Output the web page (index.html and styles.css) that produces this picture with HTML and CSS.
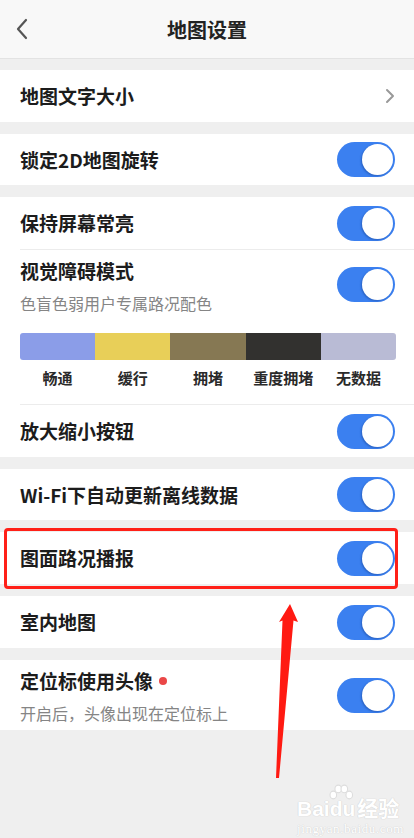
FILE: index.html
```html
<!DOCTYPE html>
<html lang="zh-CN">
<head>
  <meta charset="UTF-8" />
  <meta name="viewport" content="width=device-width, initial-scale=1.0" />
  <title>地图设置</title>
  <link rel="stylesheet" href="styles.css">
</head>
<body>
  <div class="page">
    <header class="topbar">
      <svg class="back" width="14" height="22" viewBox="0 0 14 22"><path d="M11 2 L3 11 L11 20" fill="none" stroke="#555" stroke-width="2.2" stroke-linecap="round" stroke-linejoin="round"/></svg>
      <h1>地图设置</h1>
      <span></span>
    </header>

    <section class="group">
      <div class="row">
        <span class="label">地图文字大小</span>
        <svg width="10" height="16" viewBox="0 0 10 16"><path d="M2 2 L8 8 L2 14" fill="none" stroke="#999" stroke-width="2" stroke-linecap="round" stroke-linejoin="round"/></svg>
      </div>
    </section>

    <section class="group">
      <div class="row short">
        <span class="label">锁定2D地图旋转</span>
        <span class="toggle"></span>
      </div>
    </section>

    <section class="group">
      <div class="row">
        <span class="label">保持屏幕常亮</span>
        <span class="toggle"></span>
      </div>
      <div class="divider"></div>
      <div class="vision">
        <div class="vision-head">
          <div>
            <div class="label">视觉障碍模式</div>
            <div class="sub">色盲色弱用户专属路况配色</div>
          </div>
          <span class="toggle"></span>
        </div>
        <div class="colorbar">
          <span class="c1"></span><span class="c2"></span><span class="c3"></span><span class="c4"></span><span class="c5"></span>
        </div>
        <div class="legend">
          <span>畅通</span><span>缓行</span><span>拥堵</span><span>重度拥堵</span><span>无数据</span>
        </div>
      </div>
      <div class="divider"></div>
      <div class="row">
        <span class="label">放大缩小按钮</span>
        <span class="toggle"></span>
      </div>
    </section>

    <section class="group">
      <div class="row short">
        <span class="label">Wi-Fi下自动更新离线数据</span>
        <span class="toggle"></span>
      </div>
    </section>

    <section class="group">
      <div class="row marked">
        <span class="label">图面路况播报</span>
        <span class="toggle"></span>
        <div class="mark"></div>
      </div>
    </section>

    <section class="group">
      <div class="row">
        <span class="label">室内地图</span>
        <span class="toggle"></span>
      </div>
    </section>

    <section class="group">
      <div class="row tall">
        <div>
          <div class="label">定位标使用头像 <i class="dot"></i></div>
          <div class="sub">开启后，头像出现在定位标上</div>
        </div>
        <span class="toggle"></span>
      </div>
    </section>

    <svg class="arrow" width="32" height="182" viewBox="0 0 32 182">
      <polygon points="20,4 28,22 23.5,20.5 9,178 6,178 12.5,20.5 9,22" fill="#ff1a12"/>
    </svg>

    <div class="watermark">
      <div class="wm-logo"><span>Bai</span><svg width="26" height="22" viewBox="0 0 22 20"><g fill="#fff" stroke="#ddd" stroke-width="1"><ellipse cx="4" cy="10" rx="3" ry="3.5"/><ellipse cx="8.5" cy="4.5" rx="3" ry="3.5"/><ellipse cx="14" cy="4.5" rx="3" ry="3.5"/><ellipse cx="18.5" cy="10" rx="3" ry="3.5"/></g></svg><span class="du">du</span><span>经验</span></div>
      <div class="wm-url">jingyan.baidu.com</div>
    </div>
  </div>
</body>
</html>
```

FILE: styles.css
```css
body {
  margin: 0;
  background: #efefef;
  font-family: "Noto Sans CJK SC", "Noto Sans", sans-serif;
  color: #1c1c1c;
}

.page {
  position: relative;
  width: 414px;
  height: 838px;
  overflow: hidden;
}

.topbar {
  height: 58px;
  background: #f8f8f8;
  border-bottom: 1px solid #e3e3e3;
  display: grid;
  grid-template-columns: 60px 1fr 60px;
  align-items: center;
}

.back {
  margin-left: 15px;
}

.topbar h1 {
  margin: 0;
  text-align: center;
  font-size: 20px;
  font-weight: bold;
  color: #222;
}

.group {
  background: white;
  margin-top: 12px;
}

.group:first-of-type {
  margin-top: 11px;
}

.row {
  position: relative;
  height: 52px;
  padding: 0 19px 0 20px;
  display: flex;
  align-items: center;
  justify-content: space-between;
}

.row.short {
  height: 51px;
}

.row.tall {
  height: 70px;
  padding-top: 1px;
  box-sizing: border-box;
}

.label {
  font-size: 19px;
  font-weight: bold;
  line-height: 26px;
}

.sub {
  font-size: 16px;
  line-height: 22px;
  color: #858585;
  margin-top: 8px;
}

.dot {
  display: inline-block;
  width: 8px;
  height: 8px;
  border-radius: 50%;
  background: #ea4747;
  vertical-align: 4px;
  margin-left: 2px;
}

.toggle {
  position: relative;
  flex: none;
  width: 58px;
  height: 35px;
  border-radius: 18px;
  background: #3b80f0;
}

.toggle::after {
  content: "";
  position: absolute;
  right: 2px;
  top: 2px;
  width: 31px;
  height: 31px;
  border-radius: 50%;
  background: white;
  box-shadow: -1px 1px 2px rgba(20, 60, 140, 0.45);
}

.divider {
  height: 1px;
  margin-left: 20px;
  background: #ececec;
}

.vision {
  padding: 8px 19px 16px 20px;
}

.vision-head {
  display: flex;
  align-items: center;
  justify-content: space-between;
}

.vision-head .toggle {
  margin-top: -4px;
}

.colorbar {
  display: flex;
  height: 27px;
  margin-top: 19px;
  margin-right: -1px;
  border-radius: 3px;
  overflow: hidden;
}

.colorbar span {
  flex: 1;
}

.c1 { background: #8b9de8; }
.c2 { background: #e8cf58; }
.c3 { background: #867853; }
.c4 { background: #32312f; }
.c5 { background: #b9bbd5; }

.legend {
  display: flex;
  margin-top: 8px;
  margin-right: -1px;
}

.legend span {
  flex: 1;
  text-align: center;
  font-size: 15px;
  line-height: 20px;
  font-weight: bold;
  color: #2a2a2a;
}

.mark {
  position: absolute;
  left: 4px;
  right: 16px;
  top: -4px;
  bottom: -5px;
  border: 3px solid #ff2018;
  border-radius: 4px;
}

.arrow {
  position: absolute;
  left: 270px;
  top: 600px;
}

.watermark {
  position: absolute;
  left: 297px;
  top: 784px;
  color: #fff;
  text-shadow: 0 0 1px #d0d0d0, 0 0 1px #d0d0d0;
}

.wm-logo {
  display: flex;
  align-items: flex-end;
  font-family: "Liberation Sans", "Noto Sans CJK SC", sans-serif;
  font-weight: bold;
  font-size: 21px;
  line-height: 24px;
}

.wm-logo svg {
  margin: 0 -24px 15px -2px;
}

.wm-logo .du {
  margin-right: 2px;
}

.wm-url {
  font-family: "Liberation Serif", serif;
  font-size: 13px;
  margin-top: 0;
  letter-spacing: 0.6px;
}
```
